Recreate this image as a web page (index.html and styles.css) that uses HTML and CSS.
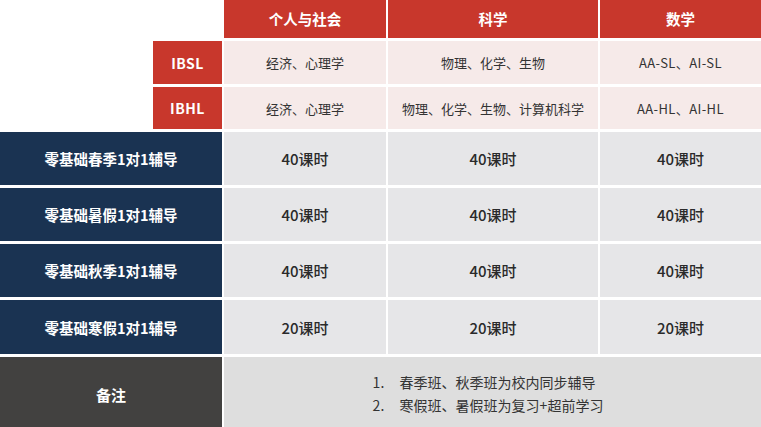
FILE: index.html
```html
<!DOCTYPE html>
<html lang="zh">
<head>
<meta charset="utf-8">
<title>IB 课程</title>
<link rel="stylesheet" href="styles.css">
</head>
<body>
<div class="table">
  <div class="blank blank-top"></div>
  <div class="cell head">个人与社会</div>
  <div class="cell head">科学</div>
  <div class="cell head">数学</div>

  <div class="blank blank-side"></div>
  <div class="cell level">IBSL</div>
  <div class="cell pale">经济、心理学</div>
  <div class="cell pale">物理、化学、生物</div>
  <div class="cell pale latin">AA-SL、AI-SL</div>

  <div class="cell level">IBHL</div>
  <div class="cell pale">经济、心理学</div>
  <div class="cell pale">物理、化学、生物、计算机科学</div>
  <div class="cell pale latin">AA-HL、AI-HL</div>

  <div class="cell navy">零基础春季1对1辅导</div>
  <div class="cell grey">40课时</div>
  <div class="cell grey">40课时</div>
  <div class="cell grey">40课时</div>

  <div class="cell navy">零基础暑假1对1辅导</div>
  <div class="cell grey">40课时</div>
  <div class="cell grey">40课时</div>
  <div class="cell grey">40课时</div>

  <div class="cell navy">零基础秋季1对1辅导</div>
  <div class="cell grey">40课时</div>
  <div class="cell grey">40课时</div>
  <div class="cell grey">40课时</div>

  <div class="cell navy">零基础寒假1对1辅导</div>
  <div class="cell grey">20课时</div>
  <div class="cell grey">20课时</div>
  <div class="cell grey">20课时</div>

  <div class="cell note-label">备注</div>
  <div class="cell note-body">
    <ol class="notes">
      <li><span class="num">1.</span><span>春季班、秋季班为校内同步辅导</span></li>
      <li><span class="num">2.</span><span>寒假班、暑假班为复习+超前学习</span></li>
    </ol>
  </div>
</div>
</body>
</html>
```

FILE: styles.css
```css
* { box-sizing: border-box; }
html, body {
  margin: 0;
  padding: 0;
  background: #ffffff;
}
body {
  width: 761px;
  height: 427px;
  overflow: hidden;
  font-family: "Noto Sans CJK SC", "Noto Sans", sans-serif;
}
.table {
  display: grid;
  grid-template-columns: 151px 69px 162px 210px 161px;
  grid-template-rows: 38px 43px 42px 53px 53px 53px 54px 70px;
  column-gap: 2px;
  row-gap: 3px;
  width: 761px;
  height: 427px;
}
.blank { background: transparent; }
.blank-top { grid-column: 1 / 3; }
.blank-side { grid-column: 1; grid-row: 2 / 4; }
.cell {
  display: flex;
  align-items: center;
  justify-content: center;
  text-align: center;
  white-space: nowrap;
}
.head {
  background: #c8372c;
  color: #ffffff;
  font-size: 14.5px;
  font-weight: 700;
  padding-bottom: 1px;
}
.level {
  grid-column: 2;
  background: #c8372c;
  color: #ffffff;
  font-size: 14px;
  font-weight: 700;
  letter-spacing: 0.5px;
}
.pale {
  background: #f6eae9;
  color: #333333;
  font-size: 13px;
}
.latin {
  letter-spacing: 0.4px;
}
.navy {
  grid-column: 1 / 3;
  background: #1a3352;
  color: #ffffff;
  font-size: 14.5px;
  font-weight: 700;
}
.grey {
  background: #e6e6e8;
  color: #2a2a2a;
  font-size: 15px;
  font-weight: 500;
}
.note-label {
  grid-column: 1 / 3;
  background: #424140;
  color: #ffffff;
  font-size: 15px;
  font-weight: 700;
  padding-top: 4px;
}
.note-body {
  grid-column: 3 / 6;
  background: #dedede;
  color: #333333;
  font-size: 14px;
  padding-right: 9px;
  padding-top: 3px;
}
.notes {
  list-style: none;
  margin: 0;
  padding: 0;
  text-align: left;
}
.notes li {
  display: flex;
  line-height: 23px;
}
.notes .num {
  width: 27px;
}
```
